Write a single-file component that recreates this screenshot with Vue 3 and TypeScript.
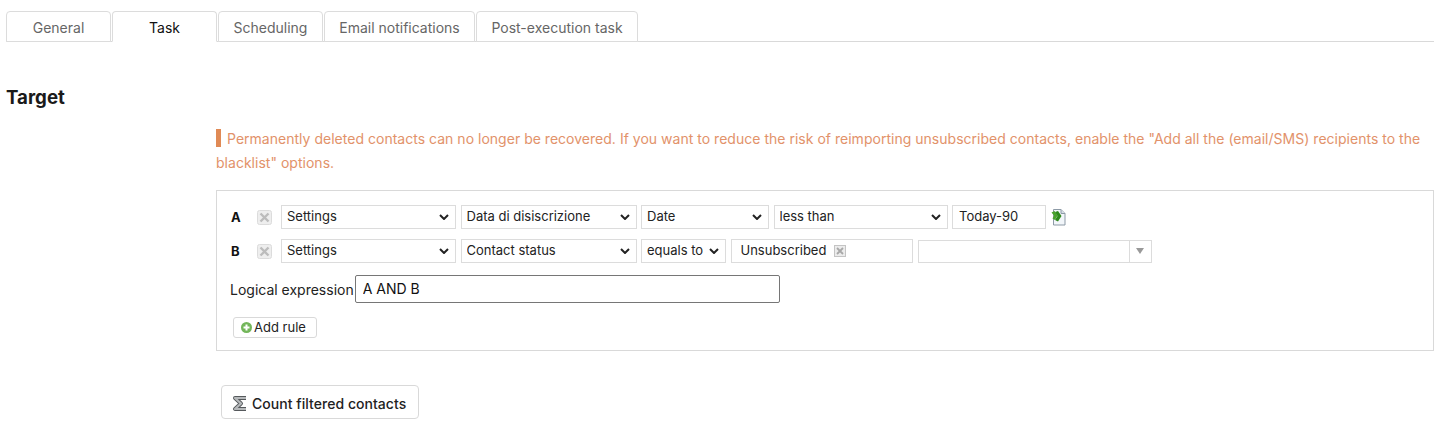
<script setup lang="ts">
const tabs = ['General', 'Task', 'Scheduling', 'Email notifications', 'Post-execution task']
</script>

<template>
  <div class="page">
    <div class="tabs">
      <div
        v-for="(t, i) in tabs"
        :key="t"
        class="tab"
        :class="{ active: i === 1 }"
        :style="{ width: [105, 105, 105, 151, 162][i] + 'px' }"
      >{{ t }}</div>
    </div>

    <h2 class="title">Target</h2>

    <div class="content">
      <p class="warning">
        <span class="mark"></span>Permanently deleted contacts can no longer be recovered. If you want to reduce the risk of reimporting unsubscribed contacts, enable the "Add all the (email/SMS) recipients to the blacklist" options.
      </p>

      <div class="box">
        <div class="rule">
          <b class="letter">A</b>
          <svg class="x" width="15" height="15" viewBox="0 0 15 15">
            <rect x="0.5" y="0.5" width="14" height="14" rx="2" fill="#eeeeee" stroke="#dcdcdc" />
            <path d="M3.500 3.500l8 8M11.500 3.500l-8 8" stroke="#bcbcbc" stroke-width="2.400" />
          </svg>
          <select class="sel w175"><option>Settings</option></select>
          <select class="sel w176"><option>Data di disiscrizione</option></select>
          <select class="sel w128"><option>Date</option></select>
          <select class="sel w174"><option>less than</option></select>
          <input class="text w94" value="Today-90" />
          <svg class="doc" width="15" height="18" viewBox="0 0 15 18">
            <path d="M2.500 1.500h7.500l4 4v11.500h-11.500z" fill="#f2f6fa" stroke="#8d9aa6" />
            <path d="M10 1.500v4h4" fill="#d5dee6" stroke="#8d9aa6" />
            <path d="M0.500 4.500l3-1.500 3 4.500-2.500 4.500-2.500-1.500 1.500-3z" fill="#4aa32c" />
            <path d="M4 4l3-1 3.500 5-3.500 5.500-3-1.500 2.500-4z" fill="#2f8a1c" />
          </svg>
        </div>

        <div class="rule">
          <b class="letter">B</b>
          <svg class="x" width="15" height="15" viewBox="0 0 15 15">
            <rect x="0.5" y="0.5" width="14" height="14" rx="2" fill="#eeeeee" stroke="#dcdcdc" />
            <path d="M3.500 3.500l8 8M11.500 3.500l-8 8" stroke="#bcbcbc" stroke-width="2.400" />
          </svg>
          <select class="sel w175"><option>Settings</option></select>
          <select class="sel w176"><option>Contact status</option></select>
          <select class="sel w85"><option>equals to</option></select>
          <div class="tagbox">
            <span>Unsubscribed</span>
            <svg width="12" height="12" viewBox="0 0 12 12">
              <rect x="0.5" y="0.5" width="11" height="11" fill="#ececec" stroke="#c4c4c4" />
              <path d="M3 3l6 6M9 3l-6 6" stroke="#a8a8a8" stroke-width="1.800" />
            </svg>
          </div>
          <div class="combo">
            <div class="combo-btn"><span class="tri"></span></div>
          </div>
        </div>

        <div class="logic">
          <label>Logical expression</label>
          <input class="expr" value="A AND B" />
        </div>

        <button class="add" type="button">
          <svg width="11" height="11" viewBox="0 0 11 11">
            <circle cx="5.5" cy="5.5" r="5.500" fill="#73b65a" />
            <path d="M5.500 2.500v6M2.500 5.500h6" stroke="#fff" stroke-width="2" />
          </svg>
          Add rule
        </button>
      </div>

      <button class="count" type="button">
        <svg width="16" height="17" viewBox="0 0 16 17">
          <path d="M14 3H3l6 5.500L3 14h11" fill="none" stroke="#55595c" stroke-width="4" stroke-linejoin="round" />
          <path d="M14 3H3l6 5.500L3 14h11" fill="none" stroke="#b6b9bb" stroke-width="2.200" stroke-linejoin="round" />
        </svg>
        Count filtered contacts
      </button>
    </div>
  </div>
</template>

<style>
html, body { margin: 0; background: #fff; }
</style>

<style scoped>
.page {
  box-sizing: border-box;
  width: 1441px;
  height: 423px;
  overflow: hidden;
  padding: 11px 7px 0 6px;
  font-family: Inter, "Liberation Sans", sans-serif;
  font-size: 13px;
  color: #222;
}
.tabs {
  display: flex;
  gap: 1px;
  height: 31px;
  box-sizing: border-box;
  border-bottom: 1px solid #d9d9d9;
}
.tab {
  box-sizing: border-box;
  height: 31px;
  border: 1px solid #dcdcdc;
  border-radius: 4px 4px 0 0;
  background: #fff;
  color: #666;
  font-size: 14px;
  line-height: 32px;
  text-align: center;
}
.tab.active {
  color: #111;
  border-bottom-color: #fff;
}
.title {
  margin: 45px 0 0;
  font-size: 18.700px;
  line-height: 22px;
  font-weight: 700;
  color: #1a1a1a;
}
.content { margin-left: 210px; }
.warning {
  margin: 18px 0 0;
  color: #e2926a;
  font-size: 14px;
  line-height: 24px;
  letter-spacing: 0.018px;
}
.mark {
  display: inline-block;
  width: 5px;
  height: 18px;
  margin-right: 6px;
  background: #e08a55;
  vertical-align: -3px;
}
.box {
  box-sizing: border-box;
  height: 161px;
  margin-top: 15px;
  padding: 14px 13px 0;
  border: 1px solid #d9d9d9;
}
.rule {
  display: flex;
  align-items: center;
  height: 24px;
  margin-bottom: 10px;
}
.letter {
  width: 27px;
  padding: 0 0 1px 1px;
  box-sizing: border-box;
  font-size: 13px;
  color: #111;
}
.x { margin-right: 9px; flex: none; }
.sel {
  appearance: none;
  box-sizing: border-box;
  height: 24px;
  margin-right: 4.500px;
  padding: 0 20px 3px 5px;
  border: 1px solid #dcdcdc;
  border-radius: 0;
  background: #fff url("data:image/svg+xml,%3Csvg xmlns='http://www.w3.org/2000/svg' width='10' height='6'%3E%3Cpath d='M1 1l4 4 4-4' fill='none' stroke='%23222' stroke-width='2'/%3E%3C/svg%3E") no-repeat right 6px center;
  color: #222;
  font: 13px Inter, "Liberation Sans", sans-serif;
}
.w175 { width: 175px; }
.w176 { width: 176px; }
.w128 { width: 128px; }
.w174 { width: 174px; }
.w85 { width: 85px; }
.text {
  box-sizing: border-box;
  height: 24px;
  padding: 0 6px 3px;
  border: 1px solid #dcdcdc;
  color: #222;
  font: 13px Inter, "Liberation Sans", sans-serif;
  outline: none;
}
.w94 { width: 94px; }
.doc { margin-left: 5px; }
.tagbox {
  box-sizing: border-box;
  display: flex;
  align-items: center;
  gap: 8px;
  width: 182px;
  height: 24px;
  margin-right: 5px;
  padding: 0 0 3px 9px;
  border: 1px solid #dcdcdc;
}
.tagbox svg { margin-top: 2px; }
.combo {
  box-sizing: border-box;
  display: flex;
  justify-content: flex-end;
  width: 234px;
  height: 23px;
  border: 1px solid #dcdcdc;
}
.combo-btn {
  display: flex;
  align-items: center;
  justify-content: center;
  width: 21px;
  border-left: 1px solid #dcdcdc;
}
.tri {
  width: 0;
  height: 0;
  border-left: 4px solid transparent;
  border-right: 4px solid transparent;
  border-top: 6px solid #999;
}
.logic {
  display: flex;
  align-items: center;
  gap: 1px;
  margin-top: 12px;
}
.logic label { color: #222; font-size: 14px; }
.expr {
  box-sizing: border-box;
  width: 425px;
  height: 28px;
  padding: 0 7px 1px;
  border: 1px solid #767676;
  border-radius: 2px;
  color: #111;
  font: 14px Inter, "Liberation Sans", sans-serif;
  outline: none;
}
.add {
  display: flex;
  align-items: center;
  gap: 2px;
  box-sizing: border-box;
  width: 84px;
  height: 21px;
  margin: 14px 0 0 3px;
  padding: 0 0 2px 7px;
  border: 1px solid #d9d9d9;
  border-radius: 3px;
  background: #fff;
  color: #222;
  font: 13px Inter, "Liberation Sans", sans-serif;
}
.add svg { margin-top: 2px; }
.count {
  display: flex;
  align-items: center;
  gap: 4px;
  box-sizing: border-box;
  width: 198px;
  height: 34px;
  margin: 34px 0 0 5px;
  padding: 3px 0 0 10px;
  border: 1px solid #d9d9d9;
  border-radius: 4px;
  background: #fff;
  color: #222;
  font: 500 14px Inter, "Liberation Sans", sans-serif;
  letter-spacing: 0.04px;
}
</style>
